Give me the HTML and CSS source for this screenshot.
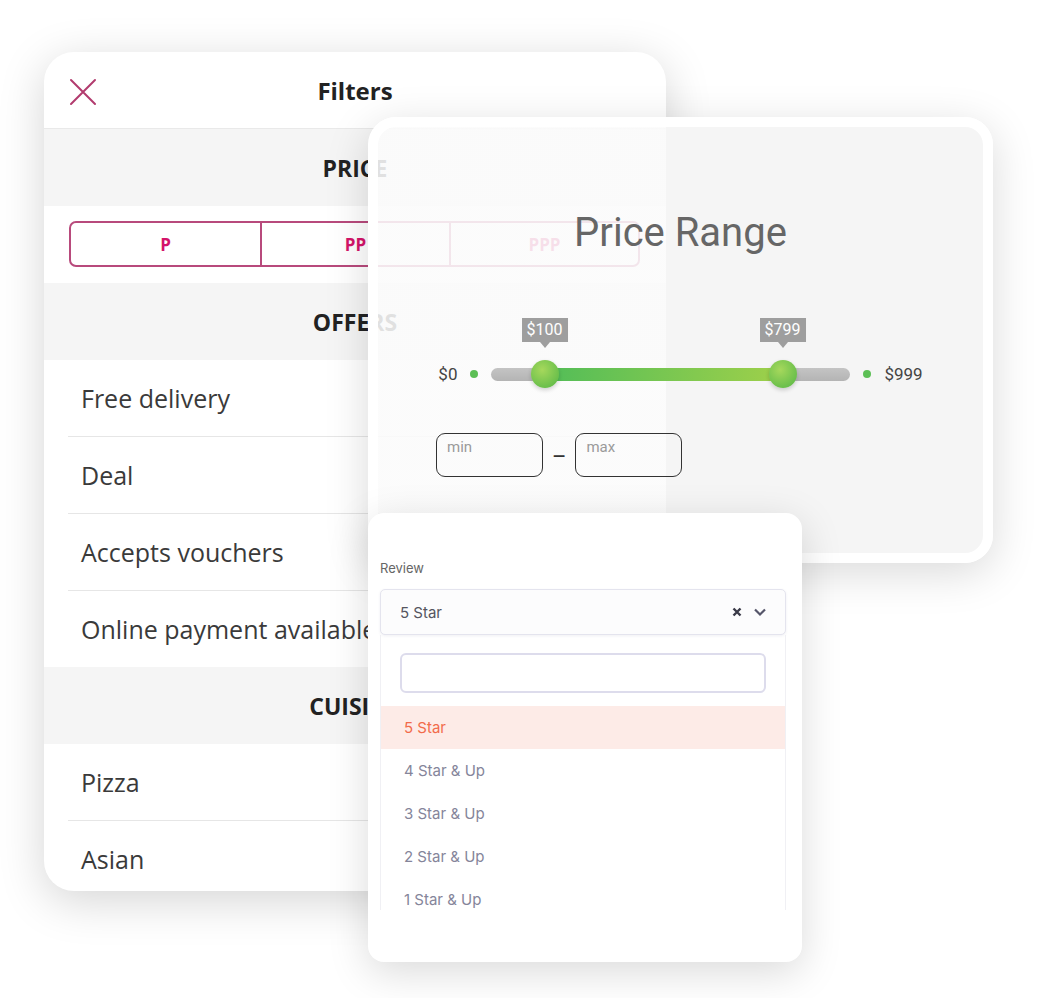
FILE: index.html
```html
<!DOCTYPE html>
<html lang="en">
<head>
    <meta charset="UTF-8">
    <meta name="viewport" content="width=device-width, initial-scale=1.0">
    <title>Filters</title>
    <link rel="stylesheet" href="styles.css">
</head>
<body>
    <div class="stage">
        <!-- Mobile filter sheet -->
        <section class="filters">
            <header class="filters-head">
                <button class="close" aria-label="Close">
                    <svg width="28" height="28" viewBox="0 0 28 28">
                        <path d="M2 2 L26 26 M26 2 L2 26" stroke="#b23b6e" stroke-width="2" fill="none" stroke-linecap="round"/>
                    </svg>
                </button>
                <h1>Filters</h1>
            </header>

            <div class="section-title">PRICE</div>
            <div class="price-row">
                <div class="segments">
                    <span class="seg">P</span>
                    <span class="seg">PP</span>
                    <span class="seg">PPP</span>
                </div>
            </div>

            <div class="section-title">OFFERS</div>
            <ul class="options">
                <li>Free delivery</li>
                <li>Deal</li>
                <li>Accepts vouchers</li>
                <li>Online payment available</li>
            </ul>

            <div class="section-title">CUISINE</div>
            <ul class="options">
                <li>Pizza</li>
                <li>Asian</li>
            </ul>
        </section>

        <!-- Price range slider -->
        <section class="price-card">
            <h2>Price Range</h2>
            <div class="slider">
                <span class="end">$0</span>
                <span class="dot"></span>
                <div class="track">
                    <div class="fill" style="left: 14.8%; width: 66.3%;"></div>
                    <span class="thumb" style="left: 14.8%;"><span class="tip">$100</span></span>
                    <span class="thumb" style="left: 81.1%;"><span class="tip">$799</span></span>
                </div>
                <span class="dot"></span>
                <span class="end">$999</span>
            </div>
            <div class="range-inputs">
                <input type="text" placeholder="min">
                <span class="dash">&ndash;</span>
                <input type="text" placeholder="max">
            </div>
        </section>

        <!-- Review select -->
        <section class="review-card">
            <label class="review-label">Review</label>
            <div class="select">
                <span class="select-value">5 Star</span>
                <span class="select-icons">
                    <svg width="12" height="12" viewBox="0 0 12 12">
                        <path d="M2.5 2.5 L9.5 9.5 M9.5 2.5 L2.5 9.5" stroke="#3a3a48" stroke-width="2.4" fill="none"/>
                    </svg>
                    <svg width="14" height="12" viewBox="0 0 14 12">
                        <path d="M2 3.5 L7 8.5 L12 3.5" stroke="#55556a" stroke-width="2.2" fill="none"/>
                    </svg>
                </span>
            </div>
            <div class="menu">
                <div class="menu-search"><input type="text"></div>
                <ul class="menu-list">
                    <li class="active">5 Star</li>
                    <li>4 Star &amp; Up</li>
                    <li>3 Star &amp; Up</li>
                    <li>2 Star &amp; Up</li>
                    <li>1 Star &amp; Up</li>
                </ul>
            </div>
        </section>
    </div>
</body>
</html>
```

FILE: styles.css
```css
body {
    margin: 0;
    background-color: #ffffff;
    font-family: "Open Sans", Arial, sans-serif;
}
.stage {
    position: relative;
    width: 1038px;
    height: 998px;
    overflow: hidden;
}

/* filter sheet */
.filters {
    position: absolute;
    left: 44px;
    top: 52px;
    width: 622px;
    height: 839px;
    background: #ffffff;
    border-radius: 30px;
    box-shadow: 0 10px 46px rgba(0, 0, 0, 0.17);
    overflow: hidden;
}
.filters-head {
    position: relative;
    height: 76px;
    display: flex;
    align-items: center;
    justify-content: center;
    border-bottom: 1px solid #e9e9e9;
}
.filters-head h1 {
    margin: 0;
    font-size: 24px;
    font-weight: 700;
    color: #222222;
}
.close {
    position: absolute;
    left: 25px;
    top: 26px;
    width: 28px;
    height: 28px;
    padding: 0;
    border: none;
    background: none;
}
.section-title {
    height: 77px;
    display: flex;
    align-items: center;
    justify-content: center;
    background: #f5f5f5;
    font-size: 23px;
    font-weight: 700;
    color: #222222;
}
.price-row {
    height: 77px;
    padding: 15px 26px 0 25px;
    box-sizing: border-box;
}
.segments {
    display: grid;
    grid-template-columns: repeat(3, 1fr);
    height: 46px;
    border: 2px solid #b84a7c;
    border-radius: 7px;
    box-sizing: border-box;
}
.seg {
    display: flex;
    align-items: center;
    justify-content: center;
    font-size: 17px;
    font-weight: 700;
    color: #d4146a;
}
.seg + .seg {
    border-left: 2px solid #b84a7c;
}
.options {
    list-style: none;
    margin: 0;
    padding: 0;
}
.options li {
    height: 76px;
    margin-left: 24px;
    padding-left: 13px;
    display: flex;
    align-items: center;
    font-size: 25px;
    color: #3a3a3a;
    border-bottom: 1px solid #e6e6e6;
}
.options li:last-child {
    border-bottom: none;
}

/* price range card, see-through where it lies over the sheet */
.price-card {
    position: absolute;
    left: 368px;
    top: 117px;
    width: 625px;
    height: 446px;
    padding-top: 83px;
    box-sizing: border-box;
    border: 10px solid #ffffff;
    border-radius: 28px;
    background: linear-gradient(90deg, rgba(251, 251, 251, 0.88) 288px, #f5f5f5 288px);
    box-shadow: 0 10px 44px rgba(0, 0, 0, 0.15);
    font-family: Roboto, Arial, sans-serif;
}
.price-card h2 {
    margin: 0;
    text-align: center;
    font-size: 40px;
    line-height: 46px;
    font-weight: 400;
    color: #666666;
}
.slider {
    display: flex;
    align-items: center;
    justify-content: center;
    gap: 13px;
    height: 28px;
    margin-top: 104px;
}
.end {
    font-size: 17px;
    color: #444444;
}
.dot {
    width: 8px;
    height: 8px;
    border-radius: 50%;
    background: #5cbf55;
}
.track {
    position: relative;
    width: 359px;
    height: 13px;
    border-radius: 7px;
    background: linear-gradient(#c4c4c4, #b4b4b4);
}
.fill {
    position: absolute;
    top: 0;
    bottom: 0;
    background: linear-gradient(90deg, #52bd58, #9fd04a);
}
.thumb {
    position: absolute;
    top: 50%;
    width: 28px;
    height: 28px;
    margin: -14px 0 0 -14px;
    border-radius: 50%;
    background: radial-gradient(circle at 40% 35%, #a6d85c, #6cc04c 70%, #5bb445);
    box-shadow: 0 2px 4px rgba(0, 0, 0, 0.18);
}
.tip {
    position: absolute;
    bottom: 46px;
    left: 50%;
    transform: translateX(-50%);
    padding: 0 5px;
    height: 24px;
    line-height: 24px;
    background: #9e9e9e;
    color: #ffffff;
    font-size: 16px;
    white-space: nowrap;
}
.tip::after {
    content: "";
    position: absolute;
    left: 50%;
    top: 100%;
    margin-left: -5px;
    border: 5px solid transparent;
    border-top: 6px solid #9e9e9e;
}
.range-inputs {
    display: flex;
    align-items: center;
    gap: 9px;
    margin: 45px 0 0 58px;
}
.range-inputs input {
    width: 107px;
    height: 44px;
    box-sizing: border-box;
    padding: 0 10px 16px;
    border: 1.5px solid #333333;
    border-radius: 9px;
    background: transparent;
    font-family: Roboto, Arial, sans-serif;
    font-size: 15px;
}
.range-inputs input::placeholder {
    color: #9a9a9a;
}
.dash {
    font-size: 22px;
    color: #333333;
    margin-top: 2px;
}

/* review select card */
.review-card {
    position: absolute;
    left: 368px;
    top: 513px;
    width: 434px;
    height: 449px;
    padding: 46px 16px 0 12px;
    box-sizing: border-box;
    background: #ffffff;
    border-radius: 16px;
    box-shadow: 0 10px 40px rgba(0, 0, 0, 0.15);
    font-family: Inter, Arial, sans-serif;
}
.review-label {
    display: block;
    font-size: 13px;
    line-height: 18px;
    color: #666666;
    margin-bottom: 12px;
}
.select {
    height: 46px;
    display: flex;
    align-items: center;
    justify-content: space-between;
    padding: 0 18px 0 19px;
    box-sizing: border-box;
    border: 1px solid #e4e4ee;
    border-radius: 5px;
    background: #fcfcfd;
    box-shadow: 0 1px 3px rgba(60, 60, 110, 0.08);
}
.select-value {
    font-size: 15px;
    color: #555560;
}
.select-icons {
    display: flex;
    align-items: center;
    gap: 10px;
}
.menu {
    height: 275px;
    overflow: hidden;
    border-left: 1px solid #f0f0f4;
    border-right: 1px solid #f0f0f4;
}
.menu-search {
    padding: 18px 19px 13px;
}
.menu-search input {
    display: block;
    width: 100%;
    height: 40px;
    box-sizing: border-box;
    border: 2px solid #dddcec;
    border-radius: 6px;
    background: #ffffff;
}
.menu-list {
    list-style: none;
    margin: 0;
    padding: 0;
}
.menu-list li {
    height: 43px;
    display: flex;
    align-items: center;
    padding-left: 23px;
    font-size: 15px;
    color: #85859a;
}
.menu-list li.active {
    background: #fdebe7;
    color: #f26b4b;
}
```
